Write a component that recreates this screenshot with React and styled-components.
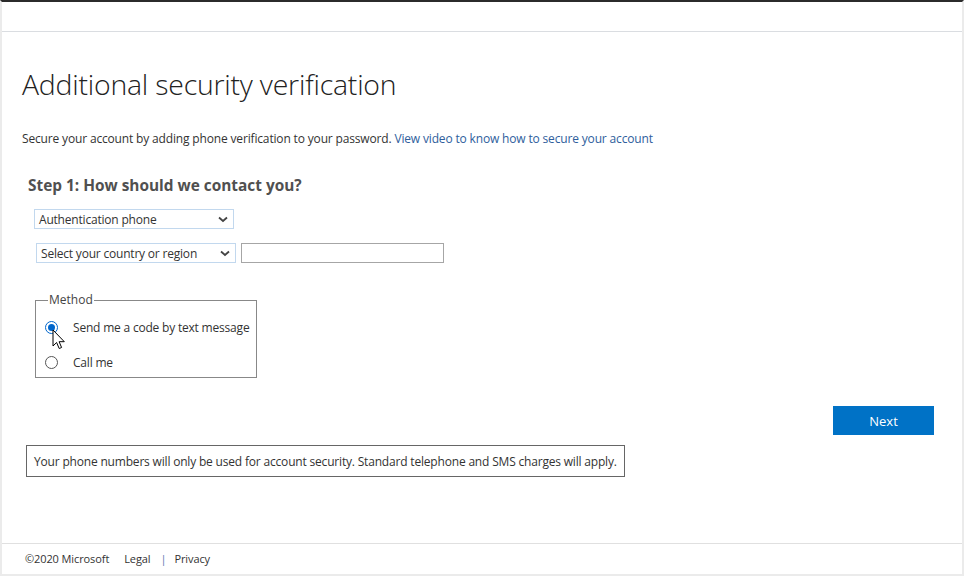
import React from 'react'
import styled, { createGlobalStyle } from 'styled-components'

const Global = createGlobalStyle`
	html, body { margin: 0; padding: 0; background: #fff; }
	body { font-family: "Segoe UI", "Open Sans", "Noto Sans", sans-serif; color: #333; }
	* { box-sizing: border-box; }
`

const Frame = styled.div`
	width: 964px; height: 576px; display: flex; flex-direction: column;
	border-top: 2px solid #2b2b2b; border-left: 2px solid #ebebeb; border-right: 2px solid #ebebeb; border-bottom: 2px solid #ebebeb;
`
const Header = styled.div`
	height: 30px; flex: none; border-bottom: 1px solid #dadde1;
`
const Main = styled.main`
	flex: 1; padding: 36px 28px 0 20px; display: flex; flex-direction: column;
`
const Title = styled.h1`
	margin: 0; font-weight: 300; font-size: 28.4px; line-height: 32px; color: #222; letter-spacing: -0.2px;
`
const Lead = styled.p`
	margin: 31px 0 0; font-size: 12px; line-height: 16px; color: #333; letter-spacing: -0.16px;
	a { color: #2e5e9c; text-decoration: none; }
`
const Step = styled.h2`
	margin: 30px 0 0 6px; font-size: 15.4px; font-weight: 700; color: #505050; line-height: 18px;
`
const Row = styled.div`
	display: flex; gap: 5px; margin: ${ p => p.mt }px 0 0 ${ p => p.ml }px;
`
const Select = styled.div`
	width: 200px; height: 20px; border: 1px solid #c2d8ee; display: flex; align-items: center; justify-content: space-between;
	padding: 0 5px 0 4px; font-size: 12px; color: #333; letter-spacing: -0.2px;
`
const TextBox = styled.div`
	width: 203px; height: 20px; border: 1px solid #a6a6a6;
`
const Fieldset = styled.fieldset`
	position: relative; margin: 31px 0 0 13px; width: 222px; height: 84px; border: 1px solid #888; padding: 10px 0 0 9px;
	legend { font-size: 12px; color: #444; padding: 0 1px; margin-left: 3px; line-height: 12px; }
`
const Option = styled.label`
	display: flex; align-items: center; gap: 15px; height: 22px; margin-bottom: ${ p => p.gap || 0 }px;
	font-size: 12px; color: #333; letter-spacing: -0.2px;
`
const Radio = styled.span`
	width: 13px; height: 13px; border-radius: 50%; flex: none;
	border: 1px solid ${ p => p.on ? '#0066cc' : '#555' }; background: #fff; display: flex; align-items: center; justify-content: center;
	&::after { content: ''; width: 7px; height: 7px; border-radius: 50%; background: ${ p => p.on ? '#0066cc' : 'transparent' }; }
`
const Cursor = styled.svg`
	position: absolute; left: 16px; top: 23px;
`
const Actions = styled.div`
	display: flex; justify-content: flex-end; margin-top: 28px;
`
const Button = styled.button`
	width: 101px; height: 29px; border: none; background: #0072c6; color: #fff; font-family: inherit; font-size: 13px; padding: 0;
`
const Notice = styled.div`
	margin: 10px 0 0 4px; width: 599px; height: 32px; border: 1px solid #666; display: flex; align-items: center;
	padding: 0 7px; font-size: 12px; color: #333; letter-spacing: -0.185px;
`
const Footer = styled.footer`
	height: 31px; flex: none; border-top: 1px solid #e0e0e0; display: flex; align-items: center; padding: 0 0 1px 23px;
	font-size: 11px; color: #333; letter-spacing: -0.1px;
`
const FootItem = styled.span`
	margin-right: ${ p => p.mr || 0 }px; color: ${ p => p.sep ? '#5c7ab0' : '#333' };
`

const Chevron = () => (
	<svg width="10" height="7" viewBox="0 0 10 7"><path d="M1 1.5l4 3.5 4-3.5" fill="none" stroke="#444" strokeWidth="1.8" /></svg>
)

export default function App() {
	return (
		<>
			<Global />
			<Frame>
				<Header />
				<Main>
					<Title>Additional security verification</Title>
					<Lead>Secure your account by adding phone verification to your password. <a href="#">View video to know how to secure your account</a></Lead>
					<Step>Step 1: How should we contact you?</Step>
					<Row mt={ 14 } ml={ 12 }>
						<Select>Authentication phone <Chevron /></Select>
					</Row>
					<Row mt={ 14 } ml={ 14 }>
						<Select>Select your country or region <Chevron /></Select>
						<TextBox />
					</Row>
					<Fieldset>
						<legend>Method</legend>
						<Option gap={ 13 }><Radio on />Send me a code by text message</Option>
						<Option><Radio />Call me</Option>
						<Cursor width="13" height="21" viewBox="0 0 13 21">
							<path d="M1 1v16l3.6-3.5 2.6 6 2.4-1-2.5-5.8h5.2z" fill="#fff" stroke="#000" strokeWidth="1" strokeLinejoin="round" />
						</Cursor>
					</Fieldset>
					<Actions><Button>Next</Button></Actions>
					<Notice>Your phone numbers will only be used for account security. Standard telephone and SMS charges will apply.</Notice>
				</Main>
				<Footer>
					<FootItem mr={ 15 }>©2020 Microsoft</FootItem>
					<FootItem mr={ 10 }>Legal</FootItem>
					<FootItem mr={ 8 } sep>|</FootItem>
					<FootItem>Privacy</FootItem>
				</Footer>
			</Frame>
		</>
	)
}
